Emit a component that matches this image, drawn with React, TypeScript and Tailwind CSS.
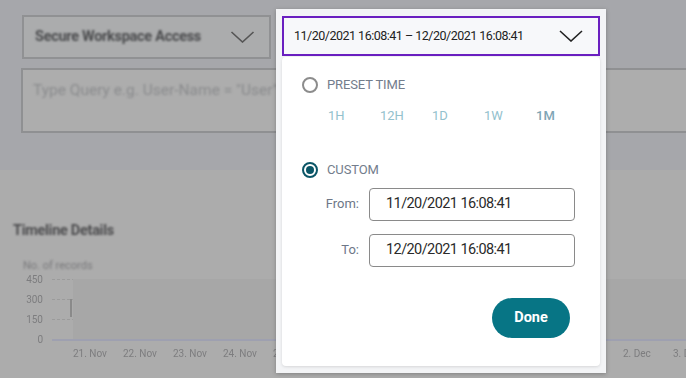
import React from 'react';

const presets = ['1H', '12H', '1D', '1W', '1M'];
const xLabels = ['21. Nov', '22. Nov', '23. Nov', '24. Nov', '25. Nov', '26. Nov', '27. Nov', '28. Nov', '29. Nov', '30. Nov', '1. Dec', '2. Dec', '3. Dec'];

const Chevron = ({ className }: { className?: string }) => (
  <svg className={className} viewBox="0 0 24 12" fill="none" stroke="currentColor" strokeWidth={1.6}>
    <path d="M1 1l11 10L23 1" />
  </svg>
);

const Background = () => (
  <div className="absolute inset-0 flex flex-col">
    <div className="h-[170px] bg-[#a6a7ab] flex flex-col">
      <div className="pl-[22px] pt-[15px]">
        <div className="w-[249px] h-[44px] border-2 border-[#909193] bg-[#abacad] flex items-center justify-between pl-[11px] pr-[14px]">
          <span className="text-[14.5px] font-bold text-[#4a4b4d] blur-[0.8px] tracking-[-0.02em]">Secure Workspace Access</span>
          <Chevron className="w-[25px] h-[12px] text-[#555] blur-[0.6px]" />
        </div>
      </div>
      <div className="mt-[9px] ml-[21px] h-[65px] border-2 border-r-0 border-[#8f9092] bg-[#adadad] pl-[10px] pt-[8px]">
        <span className="text-[15.5px] text-[#8a8b8d] blur-[0.8px]">Type Query e.g. User-Name = "User"</span>
      </div>
    </div>
    <div className="flex-1 bg-[#acacac] pl-[13px] pt-[50px]">
      <div className="text-[14.5px] font-bold text-[#4d4d4f] blur-[0.8px] tracking-[-0.02em]">Timeline Details</div>
      <div className="mt-[16px] ml-[10px] text-[11px] text-[#7a7a7c] blur-[0.8px]">No. of records</div>
      <div className="relative -mt-[2px] h-[80px]">
        {[
          ['450', 0],
          ['300', 20],
          ['150', 40],
          ['0', 60],
        ].map(([label, top]) => (
          <div key={label as string} className="absolute left-0 flex items-center w-[673px]" style={{ top: top as number }}>
            <span className="w-[30px] text-right text-[10px] text-[#7d7d7f] blur-[0.7px]">{label}</span>
            <div
              className={`ml-[9px] flex-1 ${label === '0' ? 'border-t-2 border-[#9ea0b0]' : 'border-t border-dashed border-[#9b9b9b]'}`}
            />
          </div>
        ))}
        <div className="absolute left-[60px] top-[7px] w-[620px] h-[60px] bg-[#a7a7a7]" />
        <div className="absolute left-[57px] top-[27px] w-[2px] h-[18px] bg-[#8a8a8a] blur-[0.5px]" />
        <div className="absolute left-[60px] top-[74px] flex w-[613px] overflow-hidden">
          {xLabels.map((l) => (
            <span key={l} className="w-[50px] shrink-0 text-[10px] text-[#7d7d7f] blur-[0.7px]">{l}</span>
          ))}
        </div>
      </div>
    </div>
  </div>
);

const Radio = ({ checked }: { checked?: boolean }) =>
  checked ? (
    <span className="w-[16px] h-[16px] rounded-full border-2 border-[#0b5667] flex items-center justify-center">
      <span className="w-[8px] h-[8px] rounded-full bg-[#0b5667]" />
    </span>
  ) : (
    <span className="w-[16px] h-[16px] rounded-full border-2 border-[#8c8c8c]" />
  );

export default function App() {
  return (
    <div className="relative w-[686px] h-[378px] overflow-hidden" style={{ fontFamily: 'Roboto, "Noto Sans", sans-serif' }}>
      <Background />
      <div className="absolute left-[276px] top-[9px] w-[330px] h-[364px] bg-[#f3f4f6] shadow-[0_1px_4px_rgba(0,0,0,0.25)] px-[6px] pt-[7px]">
        <div className="h-[40px] border-2 border-[#6a1fc0] bg-[#f7f8fa] flex items-center justify-between pl-[10px] pr-[15px]">
          <span className="text-[12.5px] text-[#222] tracking-[-0.04em]">11/20/2021 16:08:41 – 12/20/2021 16:08:41</span>
          <Chevron className="w-[24px] h-[12px] text-[#222]" />
        </div>
        <div className="mt-[1px] h-[309px] bg-white rounded-[4px] shadow-[0_1px_3px_rgba(0,0,0,0.12)] flex flex-col pl-[20px] pr-[20px] pt-[20px]">
          <div className="flex items-center gap-[9px] h-[16px]">
            <Radio />
            <span className="text-[13px] text-[#737d8c] tracking-[-0.01em]">PRESET TIME</span>
          </div>
          <div className="flex mt-[13px] pl-[26px] text-[13px] text-[#93c1cd]">
            {presets.map((p) => (
              <span key={p} className={`w-[52px] shrink-0 ${p === '1M' ? 'text-[#7fa5b5] font-medium' : ''}`}>{p}</span>
            ))}
          </div>
          <div className="flex items-center gap-[9px] h-[16px] mt-[36px]">
            <Radio checked />
            <span className="text-[13px] text-[#737d8c] tracking-[-0.01em]">CUSTOM</span>
          </div>
          <div className="flex items-center mt-[10px]">
            <span className="w-[57px] text-right text-[13px] text-[#6d7787]">From:</span>
            <div className="ml-[10px] w-[206px] h-[33px] border border-[#8a8a8a] rounded-[4px] flex items-center pl-[16px] text-[14.5px] text-[#2a2a2a] tracking-[-0.04em]">
              11/20/2021 16:08:41
            </div>
          </div>
          <div className="flex items-center mt-[13px]">
            <span className="w-[57px] text-right text-[13px] text-[#6d7787]">To:</span>
            <div className="ml-[10px] w-[206px] h-[33px] border border-[#8a8a8a] rounded-[4px] flex items-center pl-[16px] text-[14.5px] text-[#2a2a2a] tracking-[-0.04em]">
              12/20/2021 16:08:41
            </div>
          </div>
          <div className="flex justify-end mt-[31px] pr-[10px]">
            <button className="w-[78px] h-[40px] rounded-full bg-[#077585] text-white text-[14.5px] font-bold">Done</button>
          </div>
        </div>
      </div>
    </div>
  );
}
